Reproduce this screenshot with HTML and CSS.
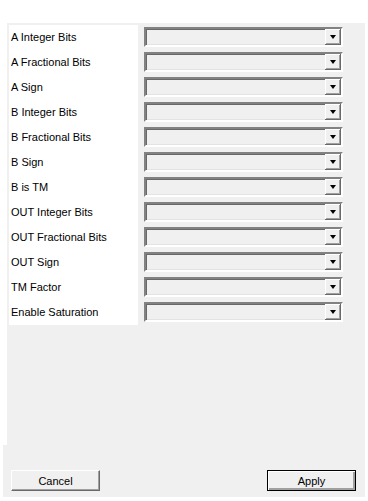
FILE: index.html
```html
<!DOCTYPE html>
<html lang="en">
<head>
    <meta charset="UTF-8">
    <meta name="viewport" content="width=device-width, initial-scale=1.0">
    <title>Settings</title>
    <link rel="stylesheet" href="styles.css">
</head>
<body>

<div class="panel">
    <div class="form">
        <div class="labels">
            <div class="label">A Integer Bits</div>
            <div class="label">A Fractional Bits</div>
            <div class="label">A Sign</div>
            <div class="label">B Integer Bits</div>
            <div class="label">B Fractional Bits</div>
            <div class="label">B Sign</div>
            <div class="label">B is TM</div>
            <div class="label">OUT Integer Bits</div>
            <div class="label">OUT Fractional Bits</div>
            <div class="label">OUT Sign</div>
            <div class="label">TM Factor</div>
            <div class="label">Enable Saturation</div>
        </div>
        <div class="fields">
            <div class="row"><div class="combo"><span class="drop"><i></i></span></div></div>
            <div class="row"><div class="combo"><span class="drop"><i></i></span></div></div>
            <div class="row"><div class="combo"><span class="drop"><i></i></span></div></div>
            <div class="row"><div class="combo"><span class="drop"><i></i></span></div></div>
            <div class="row"><div class="combo"><span class="drop"><i></i></span></div></div>
            <div class="row"><div class="combo"><span class="drop"><i></i></span></div></div>
            <div class="row"><div class="combo"><span class="drop"><i></i></span></div></div>
            <div class="row"><div class="combo"><span class="drop"><i></i></span></div></div>
            <div class="row"><div class="combo"><span class="drop"><i></i></span></div></div>
            <div class="row"><div class="combo"><span class="drop"><i></i></span></div></div>
            <div class="row"><div class="combo"><span class="drop"><i></i></span></div></div>
            <div class="row"><div class="combo"><span class="drop"><i></i></span></div></div>
        </div>
    </div>
</div>

<div class="footer">
    <button class="btn">Cancel</button>
    <button class="btn default">Apply</button>
</div>

</body>
</html>
```

FILE: styles.css
```css
body {
    margin: 0;
    background: #fff;
    font-family: "Liberation Sans", Arial, sans-serif;
    font-size: 11px;
    color: #000;
}
.panel {
    margin: 23px 0 0 7px;
    width: 354px;
    height: 418px;
    padding: 2px;
    background: #f0f0f0;
}
.form {
    display: flex;
    gap: 6px;
}
.labels {
    width: 129px;
    background: #fff;
}
.label {
    height: 25px;
    line-height: 25px;
    padding-left: 2px;
}
.row {
    height: 25px;
    padding-top: 2px;
    box-sizing: border-box;
}
.combo {
    width: 199px;
    height: 20px;
    box-sizing: border-box;
    border: 2px solid;
    border-color: #828282 #fff #fff #828282;
    box-shadow: inset 1px 1px 0 #696969, inset -1px -1px 0 #e3e3e3;
    background: #f0f0f0;
    display: flex;
    justify-content: flex-end;
}
.drop {
    width: 16px;
    height: 16px;
    box-sizing: border-box;
    border-right: 1px solid #696969;
    border-bottom: 1px solid #696969;
    box-shadow: inset 1px 1px 0 #fff, inset -1px -1px 0 #a0a0a0;
    background: #f0f0f0;
    display: flex;
    align-items: center;
    justify-content: center;
}
.drop i {
    width: 0;
    height: 0;
    border-left: 3.5px solid transparent;
    border-right: 3.5px solid transparent;
    border-top: 4px solid #000;
    margin-top: 1px;
}
.footer {
    margin-left: 3px;
    width: 362px;
    height: 52px;
    background: #f0f0f0;
    box-sizing: border-box;
    padding: 25px 9px 0 8px;
    display: flex;
    justify-content: space-between;
}
.btn {
    width: 89px;
    height: 21px;
    box-sizing: border-box;
    font-family: "Liberation Sans", Arial, sans-serif;
    font-size: 11px;
    color: #000;
    background: #f0f0f0;
    border: 1px solid;
    border-color: #fff #696969 #696969 #fff;
    box-shadow: inset -1px -1px 0 #a0a0a0;
    padding: 0;
}
.btn.default {
    border: 1px solid #000;
    box-shadow: inset 1px 1px 0 #fff, inset -2px -2px 0 #a0a0a0, inset -1px -1px 0 #696969;
}
```
